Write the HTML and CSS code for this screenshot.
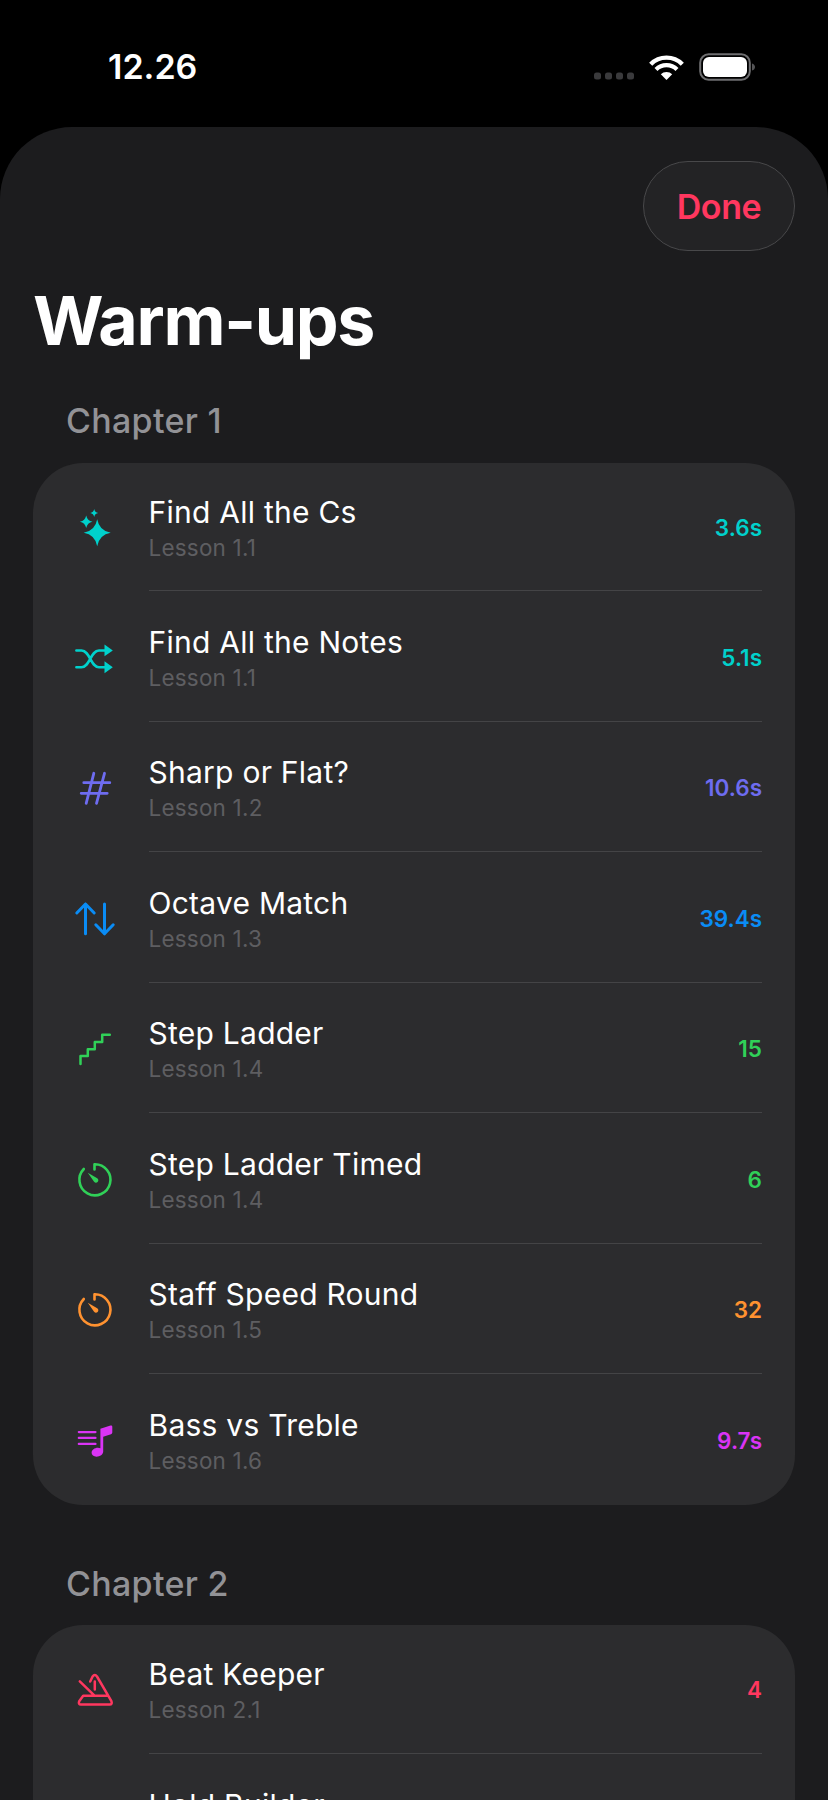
FILE: index.html
```html
<!DOCTYPE html>
<html lang="en">
<head>
  <meta charset="UTF-8">
  <meta name="viewport" content="width=device-width, initial-scale=1.0">
  <title>Warm-ups</title>
  <link rel="stylesheet" href="styles.css">
</head>
<body>
  <!-- Status bar -->
  <div class="status-bar">
    <span class="time">12.26</span>
    <svg class="status-icons" width="161" height="30" viewBox="0 0 161 30">
      <rect x="0" y="19.5" width="7" height="7" rx="2.5" fill="#3a3a3c"/>
      <rect x="11" y="19.5" width="7" height="7" rx="2.5" fill="#3a3a3c"/>
      <rect x="22" y="19.5" width="7" height="7" rx="2.5" fill="#3a3a3c"/>
      <rect x="33" y="19.5" width="7" height="7" rx="2.5" fill="#3a3a3c"/>
      <path d="M56.7 11.2A22.3 22.3 0 0 1 88.3 11.2" fill="none" stroke="#fff" stroke-width="4.4"/>
      <path d="M62 16.5A14.8 14.8 0 0 1 83 16.5" fill="none" stroke="#fff" stroke-width="4.2"/>
      <path d="M72.5 27L66.8 21.3A8 8 0 0 1 78.2 21.3Z" fill="#fff"/>
      <rect x="106.2" y="1.2" width="49.6" height="25.6" rx="8.5" fill="none" stroke="#6e6e70" stroke-width="2"/>
      <rect x="109" y="4" width="44" height="20" rx="6" fill="#fff"/>
      <path d="M158 10.5c2 .5 3 2 3 3.5s-1 3-3 3.5z" fill="#555557"/>
    </svg>
  </div>

  <div class="sheet">
    <div class="sheet-top">
      <button class="done-btn">Done</button>
    </div>
    <h1>Warm-ups</h1>

    <!-- Chapter 1 -->
    <h2 class="chapter">Chapter 1</h2>
    <div class="card">
      <div class="row c-cyan">
        <svg class="icon" viewBox="0 0 44 44"><path d="M24.2 14.2Q26.2 25.7 37.7 27.7 26.2 29.7 24.2 41.2 22.2 29.7 10.7 27.7 22.2 25.7 24.2 14.2Z"/><path d="M13.2 10.4Q14.3 15.6 19.5 16.7 14.3 17.8 13.2 23 12.1 17.8 6.9 16.7 12.1 15.6 13.2 10.4Z"/><path d="M21.2 4Q21.8 7.4 25.2 8 21.8 8.6 21.2 12 20.6 8.6 17.2 8 20.6 7.4 21.2 4Z"/></svg>
        <div class="row-main">
          <div class="row-text"><div class="row-title">Find All the Cs</div><div class="row-sub">Lesson 1.1</div></div>
          <div class="row-value">3.6s</div>
        </div>
      </div>
      <div class="row c-cyan">
        <svg class="icon" viewBox="0 0 44 44"><path class="line" d="M3.4 15.5H8.5C17 15.5 17.5 32.2 26 32.2H33M3.4 32.2H8.5C17 32.2 17.5 15.5 26 15.5H33" stroke-width="2.6"/><path d="M31.5 9.5L39.8 15.5 31.5 21.2ZM31.5 26.2L39.8 32.2 31.5 38.2Z"/></svg>
        <div class="row-main">
          <div class="row-text"><div class="row-title">Find All the Notes</div><div class="row-sub">Lesson 1.1</div></div>
          <div class="row-value">5.1s</div>
        </div>
      </div>
      <div class="row c-indigo">
        <svg class="icon" viewBox="0 0 44 44"><path class="line" d="M20.8 8.3L13.2 38.3M31.5 8.3L23.5 38.3M10.8 17.7H36.8M8.2 28.3H34.2" stroke-width="2.8"/></svg>
        <div class="row-main">
          <div class="row-text"><div class="row-title">Sharp or Flat?</div><div class="row-sub">Lesson 1.2</div></div>
          <div class="row-value">10.6s</div>
        </div>
      </div>
      <div class="row c-blue">
        <svg class="icon" viewBox="0 0 44 44"><path class="line" d="M12.5 37.8V8M3.8 17L12.5 8 21.2 17M31.5 8V37.8M22.8 28.8L31.5 37.8 40.2 28.8" stroke-width="3"/></svg>
        <div class="row-main">
          <div class="row-text"><div class="row-title">Octave Match</div><div class="row-sub">Lesson 1.3</div></div>
          <div class="row-value">39.4s</div>
        </div>
      </div>
      <div class="row c-green">
        <svg class="icon" viewBox="0 0 44 44"><path class="line" d="M7.5 38V30H14.8V23.3H21.8V16H29.2V8.7H36.8" stroke-width="2.5"/></svg>
        <div class="row-main">
          <div class="row-text"><div class="row-title">Step Ladder</div><div class="row-sub">Lesson 1.4</div></div>
          <div class="row-value">15</div>
        </div>
      </div>
      <div class="row c-green">
        <svg class="icon" viewBox="0 0 44 44"><path class="line" d="M21.5 12.5V7.3A15.5 15.5 0 1 1 10.8 12" stroke-width="2.6"/><path d="M14.8 15.8L24.2 21.3A2.4 2.4 0 1 1 20.9 24.6Z"/></svg>
        <div class="row-main">
          <div class="row-text"><div class="row-title">Step Ladder Timed</div><div class="row-sub">Lesson 1.4</div></div>
          <div class="row-value">6</div>
        </div>
      </div>
      <div class="row c-orange">
        <svg class="icon" viewBox="0 0 44 44"><path class="line" d="M21.5 12.5V7.3A15.5 15.5 0 1 1 10.8 12" stroke-width="2.6"/><path d="M14.8 15.8L24.2 21.3A2.4 2.4 0 1 1 20.9 24.6Z"/></svg>
        <div class="row-main">
          <div class="row-text"><div class="row-title">Staff Speed Round</div><div class="row-sub">Lesson 1.5</div></div>
          <div class="row-value">32</div>
        </div>
      </div>
      <div class="row c-purple">
        <svg class="icon" viewBox="0 0 44 44"><path class="line" d="M5.8 14.1H22.5M5.8 19.9H22.5M5.8 25.9H22.5" stroke-width="2.2"/><path d="M27.4 10.8L37.5 7.5Q39.3 7 39.3 8.8V14.5Q39.3 15.8 38 16.2L30.2 18.7V33.5C30.2 36.5 27 38.7 23.5 38.7 20.6 38.7 18.6 37 18.6 34.8 18.6 32 21.6 29.8 24.8 29.8 25.8 29.8 26.6 30 27.4 30.3Z"/></svg>
        <div class="row-main">
          <div class="row-text"><div class="row-title">Bass vs Treble</div><div class="row-sub">Lesson 1.6</div></div>
          <div class="row-value">9.7s</div>
        </div>
      </div>
    </div>

    <!-- Chapter 2 -->
    <h2 class="chapter chapter-next">Chapter 2</h2>
    <div class="card">
      <div class="row c-red">
        <svg class="icon" viewBox="0 0 44 44"><path class="line" d="M17.2 14.5L19.6 9.5Q21.8 6.5 24 9.5L38.4 34.2Q39.6 37.4 36.6 37.6H8Q5 37.4 6.2 34.2L10.2 28.7H34.8M6.8 14.4L21.5 28.7M21.8 14.4V22.5" stroke-width="2.5"/></svg>
        <div class="row-main">
          <div class="row-text"><div class="row-title">Beat Keeper</div><div class="row-sub">Lesson 2.1</div></div>
          <div class="row-value">4</div>
        </div>
      </div>
      <div class="row">
        <span class="icon"></span>
        <div class="row-main">
          <div class="row-text"><div class="row-title">Hold Builder</div><div class="row-sub">Lesson 2.2</div></div>
        </div>
      </div>
    </div>
  </div>
</body>
</html>
```

FILE: styles.css
```css
* {
  box-sizing: border-box;
}

html, body {
  height: 1800px;
  overflow: hidden;
}

body {
  margin: 0;
  background-color: #000000;
  color: #ffffff;
  font-family: Inter, "Liberation Sans", sans-serif;
}

.status-bar {
  height: 127px;
  display: flex;
  justify-content: space-between;
  padding: 53px 73px 0 108px;
}

.time {
  font-size: 34px;
  font-weight: 600;
  line-height: 28px;
}

.status-icons {
  display: block;
}

.sheet {
  background-color: #1c1c1e;
  border-radius: 72px 72px 0 0;
  padding: 34px 33px 0 33px;
  height: 1673px;
}

.sheet-top {
  display: flex;
  justify-content: flex-end;
}

.done-btn {
  width: 152px;
  height: 90px;
  border-radius: 45px;
  background-color: #232325;
  border: 1.5px solid #48484a;
  color: #ff375f;
  font-family: inherit;
  font-size: 34px;
  font-weight: 600;
  letter-spacing: -0.4px;
  padding: 0;
}

h1 {
  margin: 29px 0 0 0;
  font-size: 68px;
  font-weight: 700;
  letter-spacing: -1.3px;
  line-height: 80px;
}

.chapter {
  margin: 41px 0 22px 33px;
  color: #929296;
  font-size: 34px;
  font-weight: 500;
  letter-spacing: 0.3px;
  line-height: 40px;
}

.chapter-next {
  margin-top: 59px;
  margin-bottom: 21px;
}

.card {
  background-color: #2c2c2e;
  border-radius: 50px;
  padding-left: 39.5px;
  padding-right: 33px;
}

.row {
  display: flex;
  align-items: stretch;
  gap: 32px;
  height: 130.5px;
}

.row:first-child {
  height: 128.3px;
}

.row:first-child .row-main {
  padding-bottom: 1px;
}

.row:last-child {
  height: 131px;
}

.row:last-child .row-main {
  border-bottom: none;
}

.icon {
  width: 44px;
  height: 44px;
  flex: none;
  align-self: center;
  fill: currentColor;
}

.icon .line {
  fill: none;
  stroke: currentColor;
  stroke-linecap: round;
  stroke-linejoin: round;
}

.row-main {
  flex: 1;
  display: flex;
  justify-content: space-between;
  align-items: center;
  border-bottom: 1.5px solid #444446;
}

.row-text {
  padding-top: 2px;
}

.row-title {
  color: #ffffff;
  font-size: 30px;
  letter-spacing: 0.25px;
  line-height: 36px;
}

.row-sub {
  margin-top: 5px;
  color: #5e5e61;
  font-size: 22.5px;
  letter-spacing: 0.2px;
  line-height: 26px;
}

.row-value {
  font-size: 22.5px;
  font-weight: 600;
  padding-top: 2px;
}

.c-cyan { color: #00d1cc; }
.c-indigo { color: #6e6cf0; }
.c-blue { color: #0a8cf5; }
.c-green { color: #30d158; }
.c-orange { color: #ff9230; }
.c-purple { color: #da34f5; }
.c-red { color: #ff375f; }
```
